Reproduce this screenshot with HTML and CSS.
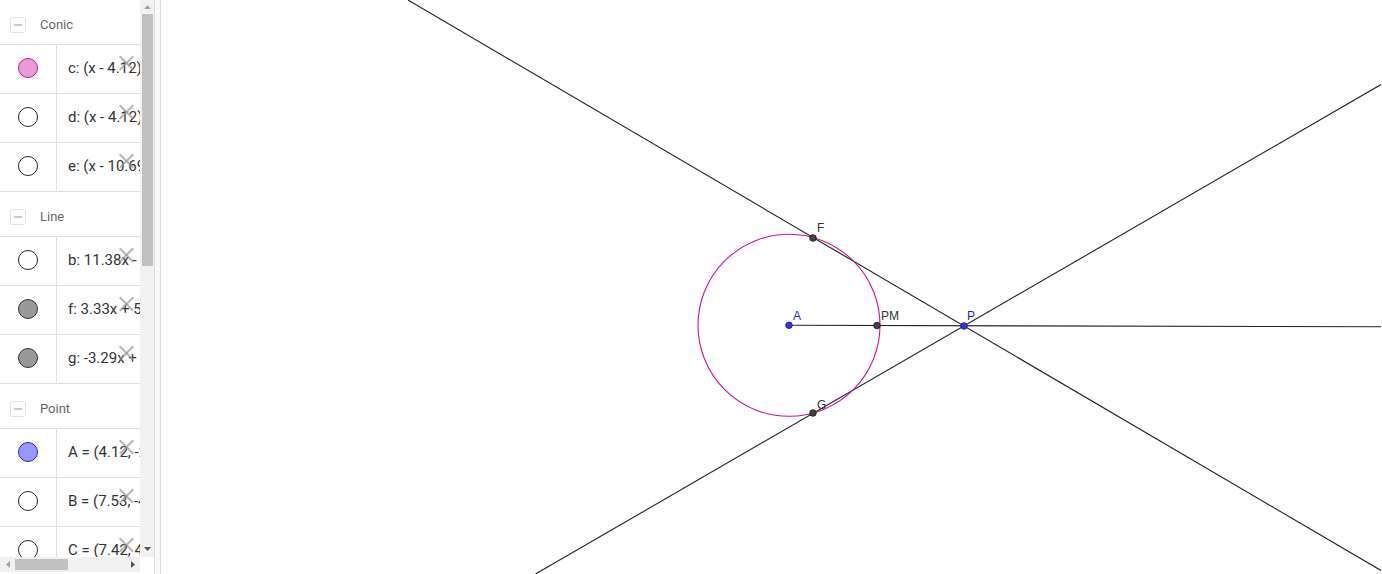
FILE: index.html
```html
<!DOCTYPE html>
<html>
<head>
<meta charset="utf-8">
<link rel="stylesheet" href="styles.css">
</head>
<body>
<div class="app">
  <aside class="algebra">
    <div class="av-body">
      <div class="av-list">
        <div class="group-head"><span class="toggle"></span><span class="group-name">Conic</span></div>
        <div class="item"><div class="marker"><span class="dot dot-conic"></span></div><div class="formula">c: (x - 4.12)² + (y - 2.41)² = 8.28</div><span class="del"></span></div>
        <div class="item"><div class="marker"><span class="dot"></span></div><div class="formula">d: (x - 4.12)² + (y - 2.41)² = 2.07</div><span class="del"></span></div>
        <div class="item"><div class="marker"><span class="dot"></span></div><div class="formula">e: (x - 10.69)² + (y - 2.43)² = 43.12</div><span class="del"></span></div>

        <div class="group-head"><span class="toggle"></span><span class="group-name">Line</span></div>
        <div class="item"><div class="marker"><span class="dot"></span></div><div class="formula">b: 11.38x - 0.09y = 46.69</div><span class="del"></span></div>
        <div class="item"><div class="marker"><span class="dot dot-line"></span></div><div class="formula">f: 3.33x + 5.74y = 49.5</div><span class="del"></span></div>
        <div class="item"><div class="marker"><span class="dot dot-line"></span></div><div class="formula">g: -3.29x + 5.7y = -21.34</div><span class="del"></span></div>

        <div class="group-head"><span class="toggle"></span><span class="group-name">Point</span></div>
        <div class="item"><div class="marker"><span class="dot dot-point"></span></div><div class="formula">A = (4.12, -2.41)</div><span class="del"></span></div>
        <div class="item"><div class="marker"><span class="dot"></span></div><div class="formula">B = (7.53, -4.21)</div><span class="del"></span></div>
        <div class="item"><div class="marker"><span class="dot"></span></div><div class="formula">C = (7.42, 4.17)</div><span class="del"></span></div>
      </div>
      <div class="vscroll">
        <div class="arrow arrow-up"><svg width="7" height="4" viewBox="0 0 7 4"><polygon points="0,4 7,4 3.5,0" fill="#a3a3a3"/></svg></div>
        <div class="vthumb"></div>
        <div class="vtrack"></div>
        <div class="arrow arrow-down"><svg width="7" height="4" viewBox="0 0 7 4"><polygon points="0,0 7,0 3.5,4" fill="#505050"/></svg></div>
      </div>
    </div>
    <div class="av-foot">
      <div class="hscroll">
        <div class="harrow"><svg width="4" height="7" viewBox="0 0 4 7"><polygon points="4,0 4,7 0,3.5" fill="#a3a3a3"/></svg></div>
        <div class="hthumb"></div>
        <div class="htrack"></div>
        <div class="harrow"><svg width="4" height="7" viewBox="0 0 4 7"><polygon points="0,0 0,7 4,3.5" fill="#505050"/></svg></div>
      </div>
      <div class="corner"></div>
    </div>
  </aside>
  <div class="splitter"></div>
  <main class="canvas">
    <svg class="graphics" width="1220" height="574" viewBox="162 0 1220 574">
      <line x1="409" y1="0" x2="1382" y2="570.5" stroke="#222" stroke-width="1.1"/>
      <line x1="536.5" y1="574" x2="1382" y2="84.6" stroke="#222" stroke-width="1.1"/>
      <line x1="790" y1="325.3" x2="1382" y2="326.8" stroke="#222" stroke-width="1.1"/>
      <circle cx="790" cy="325.3" r="91" fill="none" stroke="#cc1199" stroke-width="1.1"/>
      <circle cx="814" cy="238" r="3.3" fill="#444" stroke="#111" stroke-width="0.8"/>
      <circle cx="814" cy="413" r="3.3" fill="#444" stroke="#111" stroke-width="0.8"/>
      <circle cx="878" cy="325.5" r="3.3" fill="#444" stroke="#111" stroke-width="0.8"/>
      <circle cx="790" cy="325.3" r="3.3" fill="#3333ee" stroke="#1a1a80" stroke-width="0.8"/>
      <circle cx="965" cy="326" r="3.3" fill="#3333ee" stroke="#1a1a80" stroke-width="0.8"/>
      <text class="lbl" x="818" y="232">F</text>
      <text class="lbl" x="818" y="409">G</text>
      <text class="lbl" x="882" y="320">PM</text>
      <text class="lbl lbl-blue" x="794" y="320">A</text>
      <text class="lbl lbl-blue" x="968" y="320">P</text>
    </svg>
  </main>
</div>
</body>
</html>
```
FILE: styles.css
```css
* { box-sizing: border-box; }
html, body { margin: 0; padding: 0; }
body {
  font-family: Roboto, "Liberation Sans", sans-serif;
  background: #fff;
  overflow: hidden;
}
.app {
  display: flex;
  width: 1382px;
  height: 574px;
}
.algebra {
  width: 155px;
  flex: none;
  display: flex;
  flex-direction: column;
  border-right: 1px solid #dcdcdc;
}
.av-body {
  display: flex;
  height: 557px;
}
.av-list {
  width: 140px;
  overflow: hidden;
}
.group-head {
  height: 45px;
  display: flex;
  align-items: center;
  padding: 5px 0 0 10px;
  border-bottom: 1px solid #e0e0e0;
}
.toggle {
  width: 16px;
  height: 16px;
  border: 1px solid #e2e2e2;
  border-radius: 3px;
  position: relative;
  flex: none;
}
.toggle::after {
  content: "";
  position: absolute;
  left: 3px;
  top: 6px;
  width: 8px;
  height: 2px;
  background: #c8c8c8;
}
.group-name {
  margin-left: 14px;
  font-size: 13px;
  color: #666;
}
.item {
  height: 49px;
  display: flex;
  border-bottom: 1px solid #e0e0e0;
  position: relative;
}
.marker {
  width: 57px;
  flex: none;
  border-right: 1px solid #e0e0e0;
  display: flex;
  align-items: center;
  justify-content: center;
  padding-bottom: 3px;
}
.dot {
  width: 20px;
  height: 20px;
  border-radius: 50%;
  border: 1px solid #222;
  background: #fff;
}
.dot-conic { background: #ea9bd6; border-color: #c41a8c; }
.dot-line { background: #999; border-color: #333; }
.dot-point { background: #9999ff; border-color: #1a1aff; }
.formula {
  padding-left: 11px;
  padding-bottom: 3px;
  display: flex;
  align-items: center;
  white-space: nowrap;
  font-size: 15px;
  color: #333;
}
.del {
  position: absolute;
  left: 118px;
  top: 10px;
  width: 16px;
  height: 16px;
}
.del::before, .del::after {
  content: "";
  position: absolute;
  left: -1px;
  top: 7px;
  width: 19px;
  height: 1.8px;
  background: rgba(150, 150, 150, 0.7);
  transform: rotate(45deg);
}
.del::after { transform: rotate(-45deg); }
.vscroll {
  width: 14px;
  background: #f1f1f1;
  display: flex;
  flex-direction: column;
}
.arrow {
  height: 14px;
  flex: none;
  display: flex;
  align-items: center;
  justify-content: center;
  padding-left: 1px;
}
.arrow-down { height: 16px; }
.vthumb {
  height: 252px;
  margin-left: 2px;
  width: 11px;
  background: #c1c1c1;
  flex: none;
}
.vtrack { flex: 1; }
.av-foot {
  display: flex;
  height: 15px;
}
.hscroll {
  width: 140px;
  display: flex;
  align-items: center;
  background: #f1f1f1;
}
.harrow {
  width: 15px;
  height: 15px;
  flex: none;
  display: flex;
  align-items: center;
  justify-content: center;
}
.hthumb {
  width: 53px;
  height: 11px;
  background: #c1c1c1;
  flex: none;
}
.htrack { flex: 1; }
.corner { flex: 1; background: #fff; }
.splitter {
  width: 6px;
  flex: none;
  background: #f8f8f8;
  border-right: 1px solid #dcdcdc;
}
.canvas {
  flex: 1;
  overflow: hidden;
}
.graphics { display: block; }
.lbl {
  font-family: "Liberation Sans", Arial, sans-serif;
  font-size: 12px;
  fill: #333;
}
.lbl-blue { fill: #1a1aff; }
```
